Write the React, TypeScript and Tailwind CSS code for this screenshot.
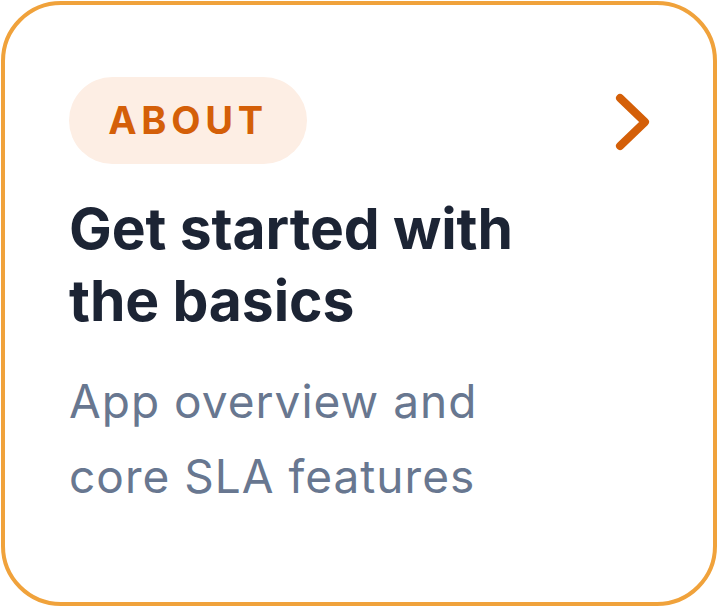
import React from "react";

function Chevron() {
  return (
    <svg width="44" height="66" viewBox="0 0 44 66" fill="none" className="shrink-0">
      <path d="M11 10 L36 34 L11 58" stroke="#d45f08" strokeWidth="8" strokeLinecap="round" strokeLinejoin="round" />
    </svg>
  );
}

export default function App() {
  return (
    <div className="h-[607px] w-[718px] bg-white p-px" style={{ fontFamily: "Inter, 'Noto Sans', sans-serif" }}>
      <div className="flex h-[605px] w-[716px] flex-col rounded-[60px] border-4 border-[#f0a23b] bg-white pl-[64px] pr-[60px] pt-[72px]">
        <div className="flex items-center justify-between">
          <div className="flex h-[87px] w-[238px] items-center justify-center rounded-full bg-[#fdeee4] text-[38px] font-bold tracking-[0.125em] text-[#d45f08]">
            ABOUT
          </div>
          <Chevron />
        </div>
        <h1 className="mt-[29px] text-[57px] font-bold leading-[72px] tracking-[-0.002em] text-[#1c2434]">
          Get started with
          <br />
          the basics
        </h1>
        <p className="mt-[27px] text-[46px] leading-[75px] tracking-[0.022em] text-[#687790]">
          App overview and
          <br />
          core SLA features
        </p>
      </div>
    </div>
  );
}
